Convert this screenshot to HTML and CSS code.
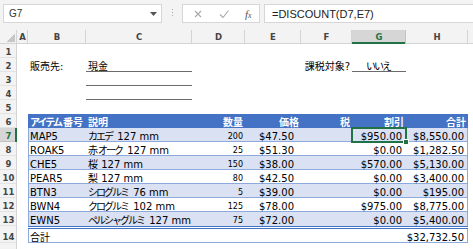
FILE: index.html
```html
<!DOCTYPE html>
<html lang="ja">
<head>
    <meta charset="UTF-8">
    <title>請求書 - DISCOUNT</title>
    <link rel="stylesheet" href="styles.css">
</head>
<body>

    <!-- Barra de fórmulas -->
    <div class="toolbar">
        <div class="namebox">
            <span>G7</span>
            <svg width="7" height="4" viewBox="0 0 7 4"><path d="M0 0h7L3.5 4z" fill="#555"/></svg>
        </div>
        <div class="grip"></div>
        <div class="fnbox">
            <svg class="ico" width="10" height="10" viewBox="0 0 10 10"><path d="M2 2l6 6M8 2l-6 6" stroke="#a8a8a8" stroke-width="1.1" fill="none"/></svg>
            <svg class="ico" width="10" height="10" viewBox="0 0 10 10"><path d="M1 5.5l3 3 5.5-7" stroke="#a8a8a8" stroke-width="1.1" fill="none"/></svg>
            <span class="fx">f<small>x</small></span>
        </div>
        <div class="formula">=DISCOUNT(D7,E7)</div>
    </div>

    <!-- Planilha -->
    <table class="sheet">
        <colgroup>
            <col class="w-rh"><col class="w-a"><col class="w-b"><col class="w-c"><col class="w-d">
            <col class="w-e"><col class="w-f"><col class="w-g"><col class="w-h"><col class="w-i">
        </colgroup>
        <tr class="colhead">
            <th class="corner"></th><th>A</th><th>B</th><th>C</th><th>D</th>
            <th>E</th><th>F</th><th class="on">G</th><th>H</th><th></th>
        </tr>
        <tr><th class="rh">1</th><td></td><td></td><td></td><td></td><td></td><td></td><td></td><td></td><td></td></tr>
        <tr>
            <th class="rh">2</th><td></td>
            <td class="l"><span class="ja">販売先</span>:</td>
            <td class="l line"><span class="ja">現金</span></td>
            <td></td><td></td>
            <td class="r"><span class="ja">課税対象</span>?</td>
            <td class="c line"><span class="ja kn">いいえ</span></td>
            <td></td><td></td>
        </tr>
        <tr><th class="rh">3</th><td></td><td></td><td class="line"></td><td></td><td></td><td></td><td></td><td></td><td></td></tr>
        <tr><th class="rh">4</th><td></td><td></td><td class="line"></td><td></td><td></td><td></td><td></td><td></td><td></td></tr>
        <tr><th class="rh">5</th><td></td><td></td><td></td><td></td><td></td><td></td><td></td><td></td><td></td></tr>
        <tr class="thead">
            <th class="rh">6</th><td></td>
            <td class="t l"><span class="ja"><span class="kn">アイテム</span>番号</span></td>
            <td class="t l"><span class="ja">説明</span></td>
            <td class="t hr"><span class="ja">数量</span></td>
            <td class="t hr"><span class="ja">価格</span></td>
            <td class="t hr"><span class="ja">税</span></td>
            <td class="t hr"><span class="ja">割引</span></td>
            <td class="t hr"><span class="ja">合計</span></td>
            <td></td>
        </tr>
        <tr class="band">
            <th class="rh on">7</th><td></td>
            <td class="t first l">MAP5</td>
            <td class="t l"><span class="ja kn">カエデ</span> 127 mm</td>
            <td class="t qty">200</td>
            <td class="t price">$47.50</td>
            <td class="t"></td>
            <td class="t num sel">$950.00<span class="selbox"><span class="handle"></span></span></td>
            <td class="t last num">$8,550.00</td>
            <td></td>
        </tr>
        <tr>
            <th class="rh">8</th><td></td>
            <td class="t first l">ROAK5</td>
            <td class="t l"><span class="ja">赤<span class="kn">オーク</span></span> 127 mm</td>
            <td class="t qty">25</td>
            <td class="t price">$51.30</td>
            <td class="t"></td>
            <td class="t num">$0.00</td>
            <td class="t last num">$1,282.50</td>
            <td></td>
        </tr>
        <tr class="band">
            <th class="rh">9</th><td></td>
            <td class="t first l">CHE5</td>
            <td class="t l"><span class="ja">桜</span> 127 mm</td>
            <td class="t qty">150</td>
            <td class="t price">$38.00</td>
            <td class="t"></td>
            <td class="t num">$570.00</td>
            <td class="t last num">$5,130.00</td>
            <td></td>
        </tr>
        <tr>
            <th class="rh">10</th><td></td>
            <td class="t first l">PEAR5</td>
            <td class="t l"><span class="ja">梨</span> 127 mm</td>
            <td class="t qty">80</td>
            <td class="t price">$42.50</td>
            <td class="t"></td>
            <td class="t num">$0.00</td>
            <td class="t last num">$3,400.00</td>
            <td></td>
        </tr>
        <tr class="band">
            <th class="rh">11</th><td></td>
            <td class="t first l">BTN3</td>
            <td class="t l"><span class="ja kn">シログルミ</span> 76 mm</td>
            <td class="t qty">5</td>
            <td class="t price">$39.00</td>
            <td class="t"></td>
            <td class="t num">$0.00</td>
            <td class="t last num">$195.00</td>
            <td></td>
        </tr>
        <tr>
            <th class="rh">12</th><td></td>
            <td class="t first l">BWN4</td>
            <td class="t l"><span class="ja kn">クログルミ</span> 102 mm</td>
            <td class="t qty">125</td>
            <td class="t price">$78.00</td>
            <td class="t"></td>
            <td class="t num">$975.00</td>
            <td class="t last num">$8,775.00</td>
            <td></td>
        </tr>
        <tr class="band before-total">
            <th class="rh">13</th><td></td>
            <td class="t first l">EWN5</td>
            <td class="t l"><span class="ja kn">ペルシャグルミ</span> 127 mm</td>
            <td class="t qty">75</td>
            <td class="t price">$72.00</td>
            <td class="t"></td>
            <td class="t num">$0.00</td>
            <td class="t last num">$5,400.00</td>
            <td></td>
        </tr>
        <tr class="total">
            <th class="rh">14</th><td></td>
            <td class="t first l"><span class="ja">合計</span></td>
            <td class="t"></td><td class="t"></td><td class="t"></td><td class="t"></td><td class="t"></td>
            <td class="t last num">$32,732.50</td>
            <td></td>
        </tr>
        <tr><th class="rh"></th><td></td><td></td><td></td><td></td><td></td><td></td><td></td><td></td><td></td></tr>
    </table>

</body>
</html>
```

FILE: styles.css
```css
body {
    margin: 0;
    width: 473px;
    height: 249px;
    overflow: hidden;
    background: #fff;
    font-family: "DejaVu Sans", "Noto Sans CJK JP", sans-serif;
    font-size: 10px;
    color: #000;
}
.ja {
    font-family: "Noto Sans CJK JP", sans-serif;
    font-size: 10px;
}
/* kana mais estreitas, como na fonte original */
.kn {
    letter-spacing: -2px;
    margin-right: 2px;
}

/* Barra de fórmulas */
.toolbar {
    display: flex;
    align-items: flex-start;
    height: 30px;
    padding: 4px 0 0 3px;
    box-sizing: border-box;
    background: #f3f3f3;
}
.namebox, .fnbox, .formula {
    height: 19px;
    box-sizing: border-box;
    background: #fff;
    border: 1px solid #d6d6d6;
    display: flex;
    align-items: center;
}
.namebox {
    width: 159px;
    justify-content: space-between;
    padding: 0 4px 0 5px;
    font-family: "Liberation Sans", sans-serif;
    font-size: 10px;
    color: #333;
}
.grip {
    width: 1px;
    height: 9px;
    margin: 5px 9px 0 10px;
    background: repeating-linear-gradient(#a8a8a8 0 1px, transparent 1px 3px);
}
.fnbox {
    width: 78px;
    padding-left: 10px;
    gap: 16px;
}
.fx {
    font-family: "Liberation Serif", serif;
    font-style: italic;
    font-size: 11px;
    color: #555;
}
.fx small {
    font-size: 8px;
}
.formula {
    flex: 1;
    margin: 0 -2px 0 4px;
    padding-left: 7px;
    font-family: "Liberation Sans", sans-serif;
    font-size: 11px;
    color: #222;
}

/* Planilha */
.sheet {
    border-collapse: separate;
    border-spacing: 0;
    table-layout: fixed;
    width: 478px;
}
.w-rh { width: 17px; }
.w-a { width: 11px; }
.w-b { width: 58px; }
.w-c { width: 106px; }
.w-d { width: 53px; }
.w-e { width: 56px; }
.w-f { width: 51px; }
.w-g { width: 54px; }
.w-h { width: 62px; }
.w-i { width: 10px; }
.sheet tr {
    height: 14px;
}
.sheet td, .sheet th {
    padding: 0;
    white-space: nowrap;
    overflow: hidden;
    line-height: 11px;
    vertical-align: bottom;
}
.colhead th {
    background: #f3f3f3;
    color: #444;
    font-size: 8.5px;
    font-weight: bold;
    line-height: 14px;
    vertical-align: middle;
    box-shadow: inset -1px 0 0 #d4d4d4, inset 0 -1px 0 #d4d4d4;
}
.colhead th.on {
    background: #d6d6d6;
    color: #217346;
    box-shadow: inset -1px 0 0 #c2c2c2, inset 0 -2px 0 #217346;
}
.colhead th.corner {
    background: #f3f3f3 linear-gradient(to top left, #c6c6c6 50%, transparent 50%) no-repeat right 2px bottom 2px / 8px 8px;
}
.rh {
    background: #f3f3f3;
    color: #444;
    font-size: 8.5px;
    font-weight: bold;
    text-align: center;
    box-shadow: inset -1px 0 0 #d4d4d4, inset 0 -1px 0 #e3e3e3;
}
.rh.on {
    background: #d6d6d6;
    color: #217346;
    box-shadow: inset -2px 0 0 #217346, inset 0 -1px 0 #c2c2c2;
}

.l { padding-left: 2px !important; }
.r { text-align: right; padding-right: 2px !important; }
.c { text-align: center; }
.line { box-shadow: inset 0 -1px 0 #6b6b6b; }

/* Tabela */
.t {
    box-shadow: inset 0 -1px 0 #8ea9db;
}
.t.first {
    box-shadow: inset 1px 0 0 #8ea9db, inset 0 -1px 0 #8ea9db;
}
.t.last {
    box-shadow: inset -1px 0 0 #8ea9db, inset 0 -1px 0 #8ea9db;
}
.thead .t {
    background: #4472c4;
    color: #fff;
    font-weight: bold;
    box-shadow: none;
}
.hr { text-align: right; padding-right: 2px !important; }
.band .t { background: #d9e1f2; }
.qty {
    text-align: right;
    padding-right: 2px !important;
    font-size: 8px;
}
.price { text-align: right; padding-right: 7px !important; }
.num { text-align: right; padding-right: 4px !important; }
.before-total .t { box-shadow: none; }
.before-total .t.first { box-shadow: inset 1px 0 0 #8ea9db; }
.before-total .t.last { box-shadow: inset -1px 0 0 #8ea9db; }
.total { height: 17px !important; }
.total .t {
    border-top: 3px double #4472c4;
}

/* Célula selecionada */
.sel {
    position: relative;
    overflow: visible !important;
}
.selbox {
    position: absolute;
    left: -1px;
    top: -1px;
    right: -1px;
    bottom: -1px;
    border: 2px solid #217346;
}
.handle {
    position: absolute;
    right: -4px;
    bottom: -4px;
    width: 4px;
    height: 4px;
    background: #217346;
    border: 1px solid #fff;
}
```
